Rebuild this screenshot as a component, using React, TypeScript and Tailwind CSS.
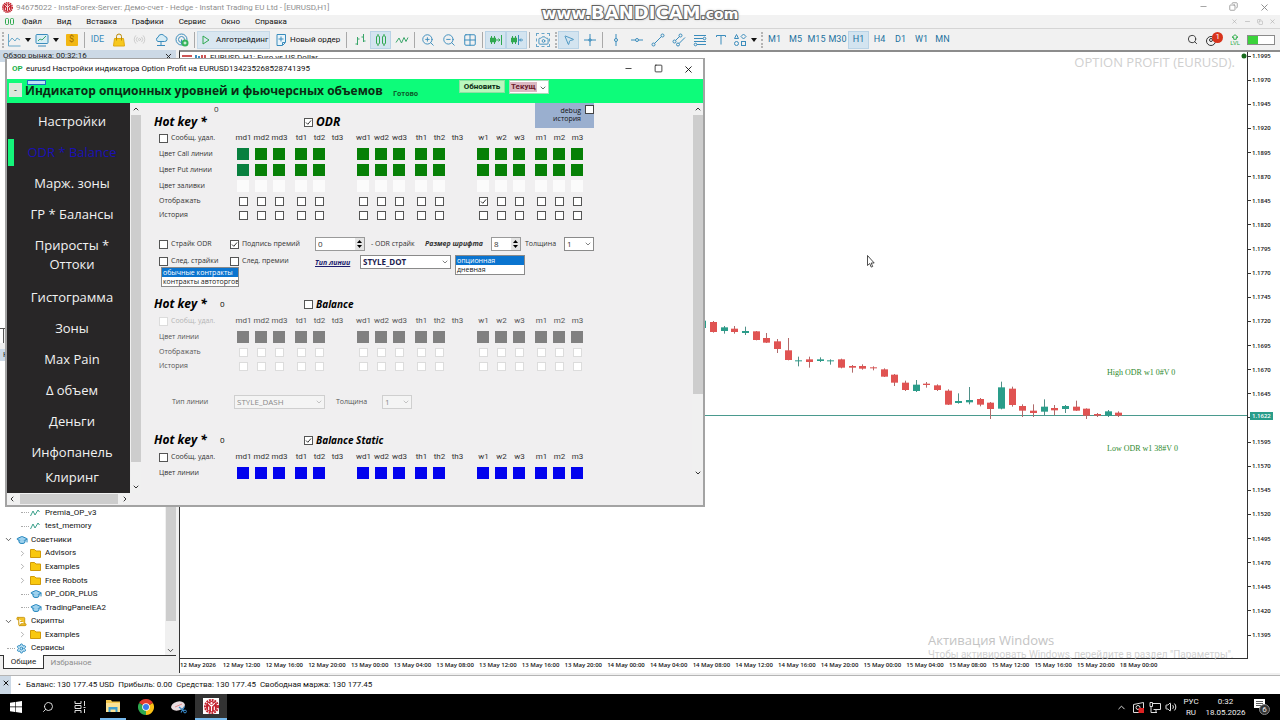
import type { ReactNode } from "react";
import { clsx } from "clsx";
import {
  Camera,
  ChevronDown,
  ChevronLeft,
  ChevronRight,
  ChevronUp,
  GraduationCap,
  Grid2x2,
  Minus,
  MousePointer2,
  Radio,
  ScrollText,
  Search,
  Settings,
  Square,
  Copy,
  Volume2,
  X,
  ZoomIn,
  ZoomOut,
} from "lucide-react";

const MENU = ["Файл", "Вид", "Вставка", "Графики", "Сервис", "Окно", "Справка"];
const TIMEFRAMES = ["M1", "M5", "M15", "M30", "H1", "H4", "D1", "W1", "MN"];

const PRICES = Array.from({ length: 25 }, (_, i) => (1.1995 - i * 0.0025).toFixed(4));

const HOURS = ["00:00", "04:00", "08:00", "12:00", "16:00", "20:00"];
const TIMES = [
  "12 May 2026",
  "12 May 12:00",
  "12 May 16:00",
  "12 May 20:00",
  ...["13", "14", "15"].flatMap((d) => HOURS.map((h) => `${d} May ${h}`)),
  "18 May 00:00",
];

// [up, body top, body bottom, high, low], in thirds of a pixel below y = 300
const CANDLES: [number, number, number, number, number][] = [
  [1, 62, 84, 60, 86],
  [0, 66, 96, 63, 98],
  [1, 82, 93, 78, 101],
  [0, 86, 96, 78, 101],
  [1, 93, 99, 80, 105],
  [0, 94, 120, 93, 121],
  [0, 114, 128, 99, 129],
  [0, 124, 147, 117, 159],
  [0, 151, 180, 114, 181],
  [1, 181, 184, 170, 199],
  [0, 178, 186, 170, 203],
  [1, 178, 183, 172, 186],
  [1, 181, 184, 178, 194],
  [0, 178, 203, 176, 205],
  [0, 198, 203, 195, 218],
  [0, 198, 206, 193, 209],
  [0, 202, 205, 199, 211],
  [0, 208, 230, 205, 231],
  [0, 224, 248, 222, 258],
  [0, 248, 270, 242, 273],
  [1, 254, 273, 240, 276],
  [0, 251, 255, 246, 263],
  [0, 256, 270, 253, 273],
  [0, 272, 314, 268, 315],
  [1, 303, 309, 280, 311],
  [1, 300, 307, 261, 313],
  [0, 297, 314, 294, 319],
  [0, 308, 327, 306, 357],
  [1, 262, 326, 245, 328],
  [0, 266, 315, 260, 320],
  [0, 318, 332, 313, 351],
  [0, 332, 339, 313, 351],
  [1, 320, 335, 298, 347],
  [0, 324, 331, 315, 346],
  [1, 318, 327, 315, 339],
  [0, 320, 332, 302, 333],
  [0, 326, 347, 325, 357],
  [0, 342, 347, 339, 351],
  [1, 334, 347, 330, 351],
  [0, 338, 347, 334, 351],
];

const PAIRS = [
  [["md1", "md2", "md3"], ["td1", "td2", "td3"]],
  [["wd1", "wd2", "wd3"], ["th1", "th2", "th3"]],
  [["w1", "w2", "w3"], ["m1", "m2", "m3"]],
];

/* ---------- toolbar ---------- */

const Sep = () => (
  <span className="flex h-4 w-[5px] justify-center">
    <span className="w-px bg-[#a9a9a9]" />
  </span>
);

const Grip = () => (
  <span className="flex h-4 w-[5px] justify-center">
    <span className="w-0 border-l-2 border-dotted border-[#b4b4b4]" />
  </span>
);

const Caret = () => (
  <svg viewBox="0 0 6 4" className="h-[4px] w-[6px]">
    <path d="M0 0h6L3 4z" fill="#111" />
  </svg>
);

function Tool({ label, active, wide, children }: { label: string; active?: boolean; wide?: boolean; children: ReactNode }) {
  return (
    <button
      aria-label={label}
      className={clsx(
        "flex h-[18px] shrink-0 items-center justify-center gap-[4px] text-[#3a8cbc]",
        wide ? "w-[28px]" : "w-[21px]",
        active && "border border-[#b9d3e6] bg-[#d3e4f0]"
      )}
    >
      {children}
    </button>
  );
}

function Ico({ children, color = "#3a8cbc" }: { children: ReactNode; color?: string }) {
  return (
    <svg viewBox="0 0 14 14" className="h-[14px] w-[14px] shrink-0" fill="none" stroke={color} strokeWidth="1">
      {children}
    </svg>
  );
}

function Toolbar() {
  return (
    <div className="flex h-[21px] items-center bg-[#f1f1f1]">
      <Grip />
      <Tool label="Тип графика" wide>
        <Ico color="#6ba9ca">
          <path d="M1.5 1v12h12M2 9l3-4 3 3 2-3 3 2" />
        </Ico>
        <Caret />
      </Tool>
      <Tool label="Индикаторы" wide>
        <Ico>
          <rect x="1" y="1.5" width="12" height="9" rx="1" fill="#d7ecf5" />
          <path d="M3 13h8" />
          <path d="M3 8l2-2 2 1 4-4" stroke="#3aa66a" />
        </Ico>
        <Caret />
      </Tool>
      <Tool label="Котировки">
        <span className="flex h-[12px] w-[12px] items-center justify-center rounded-[1px] bg-[#f2b714] text-[9px] leading-none text-[#a26d00]">
          $
        </span>
      </Tool>
      <Sep />
      <Tool label="IDE">
        <span className="text-[9px]">IDE</span>
      </Tool>
      <Tool label="Маркет">
        <Ico color="#e0aa10">
          <path d="M2.5 5.500h9l1 7.500h-11z" fill="#f7c81e" />
          <path d="M4.500 7.500V3.500a2.500 2.500 0 0 1 5 0v4" stroke="#b98a08" />
        </Ico>
      </Tool>
      <Tool label="Сигналы">
        <Radio size={13} strokeWidth={1.5} className="text-[#c4c4c4]" />
      </Tool>
      <Tool label="VPS">
        <Ico>
          <path d="M4 8.5h6.5a2.5 2.5 0 0 0 .3-5A3.6 3.6 0 0 0 4 4.3a2.2 2.2 0 0 0 0 4.2z" fill="#d7ecf5" />
          <path d="M7 9v3M3 12.5h8" />
        </Ico>
      </Tool>
      <Tool label="Тестер">
        <Ico>
          <circle cx="6.5" cy="6.5" r="5.5" />
          <circle cx="6.5" cy="6.5" r="3" />
          <path d="M6.5 6.5v5" />
          <circle cx="10" cy="10" r="3.500" fill="#35b35a" stroke="none" />
          <path d="M8.5 10h3M10 8.500v3" stroke="#fff" />
        </Ico>
      </Tool>
      <Sep />
      <button className="flex h-[18px] w-[73px] shrink-0 items-center gap-[6px] border border-[#c6d9e7] bg-[#d9e7f1] pl-[4px] text-[8px] text-[#111]">
        <svg viewBox="0 0 8 10" className="h-[10px] w-[8px] shrink-0">
          <path d="M1 1v8l6-4z" fill="none" stroke="#2fa84f" />
        </svg>
        <span className="whitespace-nowrap">Алготрейдинг</span>
      </button>
      <button className="flex h-[18px] w-[74px] shrink-0 items-center gap-[2px] pl-[4px] text-[8px] text-[#111]">
        <Ico>
          <path d="M3 1.500h8.500v8l-3 3H3z" fill="#e9f4fa" />
          <path d="M11 9.500H8.500V12M4.500 6h5M7 3.500v5" />
        </Ico>
        <span className="whitespace-nowrap">Новый ордер</span>
      </button>
      <Sep />
      <Tool label="Бары">
        <Ico color="#3aa66a">
          <path d="M4.500 4v8M2.500 11h2M4.500 6h2M10.500 1v8M8.500 4h2M10.500 8h2" />
        </Ico>
      </Tool>
      <Tool label="Свечи" active>
        <Ico color="#2fa84f">
          <rect x="2.500" y="3" width="3" height="8" rx="1" />
          <rect x="8.500" y="3" width="3" height="8" rx="1" />
          <path d="M4 1v2M4 11v2M10 1v2M10 11v2" />
        </Ico>
      </Tool>
      <Tool label="Линия">
        <Ico color="#3aa66a">
          <path d="M1 9.500 4 5l2.500 5L9 4.500l2 4 2-4" />
        </Ico>
      </Tool>
      <Sep />
      <Tool label="Увеличить">
        <ZoomIn size={14} strokeWidth={1.6} />
      </Tool>
      <Tool label="Уменьшить">
        <ZoomOut size={14} strokeWidth={1.6} />
      </Tool>
      <Tool label="Окна плиткой">
        <Grid2x2 size={14} strokeWidth={1.7} />
      </Tool>
      <Sep />
      <Tool label="Автопрокрутка" active>
        <Ico color="#2fa84f">
          <path d="M2.500 3v8M5.500 3v8M12.500 2v10M7 7h4M9.500 5.500 11 7 9.500 8.500" />
          <path d="M1.500 5h2v4h-2zM4.500 5h2v4h-2z" fill="#2fa84f" />
        </Ico>
      </Tool>
      <Tool label="Сдвиг графика" active>
        <Ico>
          <path d="M8.500 2v10M13 7H9.500M11 5.500 9.500 7 11 8.500" />
          <path d="M2.500 3v8M5.500 3v8M1.500 5h2v4h-2zM4.500 5h2v4h-2z" stroke="#2fa84f" fill="#2fa84f" />
        </Ico>
      </Tool>
      <Sep />
      <Tool label="Снимок экрана">
        <span className="flex h-[14px] w-[14px] items-end justify-end border border-dashed border-[#6ba6c9]">
          <Camera size={11} strokeWidth={2} className="shrink-0 bg-[#f1f1f1]" />
        </span>
      </Tool>
      <Grip />
      <Tool label="Курсор" active>
        <MousePointer2 size={12} strokeWidth={1.7} />
      </Tool>
      <Tool label="Перекрестие">
        <Ico>
          <path d="M7 1v12M1 7h12M5.500 7 7 5.500 8.500 7 7 8.500z" />
        </Ico>
      </Tool>
      <Sep />
      <Tool label="Вертикальная линия">
        <Ico>
          <path d="M7 1v4.500M7 8.500V13" />
          <circle cx="7" cy="7" r="1.500" />
        </Ico>
      </Tool>
      <Tool label="Горизонтальная линия">
        <Ico>
          <path d="M1 7h4.500M8.500 7H13" />
          <circle cx="7" cy="7" r="1.500" />
        </Ico>
      </Tool>
      <Tool label="Трендовая линия">
        <Ico>
          <path d="M3.500 10.500l7-7" />
          <circle cx="2.500" cy="11.500" r="1.500" />
          <circle cx="11.500" cy="2.500" r="1.500" />
        </Ico>
      </Tool>
      <Tool label="Канал">
        <Ico>
          <path d="M3.500 7.500l4-4M7 10.500l6-6" />
          <circle cx="2.500" cy="8.500" r="1.500" />
          <circle cx="8.500" cy="2.500" r="1.500" />
          <circle cx="6" cy="11.500" r="1.500" />
        </Ico>
      </Tool>
      <Tool label="Фибоначчи">
        <Ico>
          <path d="M1 2.500h12M1 5.500h9M1 8.500h12M4 11.500h9" />
          <circle cx="11.500" cy="5.500" r="1.300" />
          <circle cx="2.500" cy="11.500" r="1.300" />
        </Ico>
      </Tool>
      <Tool label="Текст">
        <Ico>
          <path d="M2.500 4V2.500h9V4M7 2.500v9" />
        </Ico>
      </Tool>
      <Tool label="Объекты" wide>
        <Ico>
          <path d="M1.500 5.500h4l-2-4zM8 3.500l2.500-2.500L13 3.500 10.500 6z" />
          <circle cx="3.500" cy="10.500" r="2" />
          <rect x="8.500" y="8.500" width="4" height="4" />
        </Ico>
        <Caret />
      </Tool>
      <Grip />
      {TIMEFRAMES.map((tf) => (
        <Tool key={tf} label={tf} active={tf === "H1"}>
          <span className="text-[9px] text-[#23719f]">{tf}</span>
        </Tool>
      ))}
      <div className="ml-auto flex items-center gap-[7px] pr-[5px]">
        <Search size={11} className="text-[#333]" />
        <span className="relative flex h-[16px] w-[18px] items-center">
          <Ico color="#333">
            <circle cx="6" cy="8" r="4.500" />
            <circle cx="6" cy="7" r="1.500" />
          </Ico>
          <span className="absolute top-0 right-0 flex h-[11px] w-[11px] items-center justify-center rounded-full bg-[#d8331c] text-[8px] text-white">
            1
          </span>
        </span>
        <span className="flex flex-col items-center text-[6px] leading-[6px] text-[#2fae4a]">
          <svg viewBox="0 0 8 6" className="h-[6px] w-[8px]" fill="none" stroke="#2fae4a">
            <path d="M4 .7l3 2.600H5.300v2H2.700v-2H1z" />
          </svg>
          LVL
        </span>
        <span className="flex h-[10px] w-[28px] border border-[#8b8b8b] bg-white">
          <span className="w-[10px] bg-[#3bd23b]" />
        </span>
      </div>
    </div>
  );
}

/* ---------- navigator ---------- */

function TreeRow({ level, kind, name }: { level: 0 | 1; kind: string; name: string }) {
  const branch = kind !== "ind" && !(kind === "cap" && level === 1) && kind !== "gear";
  return (
    <li className="flex flex-1 items-center whitespace-nowrap">
      {level === 1 && <span className="w-[14px] shrink-0" />}
      <span className="flex h-full w-[16px] shrink-0 items-center justify-center">
        {branch ? (
          level === 0 ? (
            <ChevronDown size={9} className="text-[#333]" />
          ) : (
            <ChevronRight size={9} className="text-[#999]" />
          )
        ) : (
          <span className="ml-[6px] w-[8px] border-t border-dotted border-[#aaa]" />
        )}
      </span>
      <span className="flex w-[15px] shrink-0 items-center">
        {kind === "cap" && <GraduationCap size={12} className="fill-[#9fd2ee] text-[#2385bd]" />}
        {kind === "scroll" && <ScrollText size={11} className="fill-[#f5c52a] text-[#c9960c]" />}
        {kind === "gear" && <Settings size={11} className="fill-[#c5e4f4] text-[#2385bd]" />}
        {kind === "folder" && (
          <svg viewBox="0 0 11 9" className="h-[9px] w-[11px]">
            <path d="M.5.500h4l1.500 1.500h4.500v6.500H.5z" fill="#f9c80e" stroke="#d09a08" />
          </svg>
        )}
        {kind === "ind" && (
          <svg viewBox="0 0 10 8" className="h-[8px] w-[10px]">
            <path d="M.5 7 3 2l2 4 3-5 1.500 2" fill="none" stroke="#3aa08a" />
          </svg>
        )}
      </span>
      {name}
    </li>
  );
}

function Sidebar() {
  return (
    <aside className="flex w-[176px] shrink-0 flex-col">
      <div className="flex h-[12px] items-center justify-between bg-[#ccd9e6] px-[3px] text-[8px]">
        <span>Обзор рынка: 00:32:16</span>
        <X size={9} strokeWidth={2.500} />
      </div>
      <div className="h-[266px] border-r border-[#d5d5d5] bg-white" />
      <div className="h-[21px] border-t border-[#555]">
        <div className="h-[14px] w-[4px] border-r border-[#555] bg-white" />
      </div>
      <div className="flex h-[12px] items-center bg-[#ccd9e6] px-[3px] text-[8px]">Навигатор</div>
      <div className="flex flex-1 items-end bg-white">
        <ul className="flex h-[149px] flex-1 flex-col text-[8px] text-[#111]">
          <TreeRow level={1} kind="ind" name="Premia_OP_v3" />
          <TreeRow level={1} kind="ind" name="test_memory" />
          <TreeRow level={0} kind="cap" name="Советники" />
          <TreeRow level={1} kind="folder" name="Advisors" />
          <TreeRow level={1} kind="folder" name="Examples" />
          <TreeRow level={1} kind="folder" name="Free Robots" />
          <TreeRow level={1} kind="cap" name="OP_ODR_PLUS" />
          <TreeRow level={1} kind="cap" name="TradingPanelEA2" />
          <TreeRow level={0} kind="scroll" name="Скрипты" />
          <TreeRow level={1} kind="folder" name="Examples" />
          <TreeRow level={0} kind="gear" name="Сервисы" />
        </ul>
        <div className="flex h-[149px] w-[11px] flex-col items-center justify-between bg-[#f0f0f0]">
          <span className="h-[115px] w-[10px] bg-[#cdcdcd]" />
          <ChevronDown size={9} />
        </div>
      </div>
      <div className="flex h-[18px] items-start border-t border-[#333] pl-[3px] text-[8px]">
        <button className="-mt-px h-[14px] w-[41px] border border-t-0 border-[#333] bg-white">Общие</button>
        <button className="h-[13px] w-[54px] text-[#8d8d8d]">Избранное</button>
      </div>
    </aside>
  );
}

/* ---------- chart ---------- */

function Chart() {
  return (
    <main className="flex flex-1 border-t-2 border-l border-t-[#8c8c8c] border-l-[#333] bg-white">
      <div className="flex flex-1 flex-col">
        <div className="relative border-r border-b border-[#333]">
          <svg viewBox="180 52 1067 606" preserveAspectRatio="xMaxYMin meet" className="block h-[606px] w-full">
            <path d="M180 415.500H1247" stroke="#4a9a8e" />
            {CANDLES.map(([up, top, bottom, high, low], i) => {
              const x = Math.round(702.3 + i * 10.67);
              const fill = up ? "#2a9d8a" : "#e05352";
              return (
                <g key={i}>
                  <path d={`M${x + 0.5} ${300 + high / 3}V${300 + low / 3}`} stroke={up ? "#4f9088" : "#b06a6a"} />
                  <rect x={x - 3} y={300 + top / 3} width="7" height={(bottom - top) / 3} fill={fill} />
                </g>
              );
            })}
            <circle cx="1244" cy="56" r="2.500" fill="#17691c" />
            <g fill="#2f8a2f" className="font-['Liberation_Serif',serif] text-[8px]">
              <text x="1107" y="375">High ODR w1 0#V 0</text>
              <text x="1107" y="451">Low ODR w1 38#V 0</text>
            </g>
          </svg>
          <div className="absolute top-0 left-[2px] flex items-center gap-[4px] text-[8px] leading-[12px]">
            <svg viewBox="0 0 24 8" className="h-[8px] w-[24px]" fill="none">
              <path d="M0 2h10M0 5h10" stroke="#c55" strokeWidth="2" />
              <path d="M14 1v6M17 2v6" stroke="#3a8fc0" strokeWidth="2" />
              <path d="M20 1v6M23 1v6" stroke="#c55" strokeWidth="2" />
            </svg>
            EURUSD, H1: Euro vs US Dollar
          </div>
          <div className="absolute top-[1px] right-[12px] font-['Open_Sans',sans-serif] text-[13px] leading-[18px] text-[#d0d0d0]">
            OPTION PROFIT (EURUSD).
          </div>
          <div className="absolute right-[14px] bottom-[-4px] w-[305px] whitespace-nowrap text-[#c4c4c4]">
            <p className="font-['Open_Sans',sans-serif] text-[13px] leading-[16px]">Активация Windows</p>
            <p className="text-[10px] leading-[14px] text-[#d2d2d2]">
              Чтобы активировать Windows, перейдите в раздел "Параметры".
            </p>
          </div>
        </div>
        <div className="grid grid-cols-[repeat(25,1fr)] font-['Open_Sans',sans-serif] text-[6px] leading-[12px] font-semibold text-[#111]">
          {TIMES.map((t) => (
            <span key={t} className="w-0 whitespace-nowrap">
              {t}
            </span>
          ))}
        </div>
      </div>
      <div className="relative flex h-[606px] w-[32px] flex-col justify-between pb-[19px] font-['Open_Sans',sans-serif] text-[6px] leading-[8px] font-semibold text-[#111]">
        {PRICES.map((p) => (
          <span key={p} className="flex items-center gap-px">
            <span className="h-px w-[3px] bg-[#333]" />
            {p}
          </span>
        ))}
        <span className="absolute top-[360px] left-[2px] bg-[#2a9d8a] px-[2px] text-white">1.1622</span>
      </div>
    </main>
  );
}

/* ---------- indicator window ---------- */

function Check({ label, text, checked, disabled }: { label: string; text?: boolean; checked?: boolean; disabled?: boolean }) {
  return (
    <label className={clsx("flex items-center gap-[3px] whitespace-nowrap", disabled && "text-[#b5b5b5]")}>
      <span className="relative flex">
        <input
          type="checkbox"
          aria-label={label}
          defaultChecked={checked}
          disabled={disabled}
          className="peer h-[9px] w-[9px] appearance-none border border-[#555] bg-white disabled:border-[#dcdcdc]"
        />
        <svg viewBox="0 0 9 9" className="pointer-events-none absolute inset-0 hidden peer-checked:block" fill="none">
          <path d="M2 4.500 3.800 6.300 7 2.500" stroke="#333" />
        </svg>
      </span>
      {text && label}
    </label>
  );
}

function DropDown({ label, value, className, disabled }: { label: string; value: string; className: string; disabled?: boolean }) {
  return (
    <span className={clsx("relative flex h-[14px]", className)}>
      <select
        aria-label={label}
        disabled={disabled}
        className="w-full appearance-none border border-[#8a8a8a] bg-white pl-[2px] leading-[12px] disabled:border-[#cfcfcf] disabled:bg-[#f4f4f4] disabled:text-[#8a8a8a]"
      >
        <option>{value}</option>
      </select>
      <ChevronDown size={8} className={clsx("pointer-events-none absolute top-[3px] right-[2px]", disabled ? "text-[#aaa]" : "text-[#444]")} />
    </span>
  );
}

function Spin({ label, value, className }: { label: string; value: number; className: string }) {
  return (
    <span className={clsx("flex h-[14px] border border-[#9a9a9a] bg-white", className)}>
      <input aria-label={label} defaultValue={value} className="w-0 flex-1 bg-white px-[2px] text-[8px]" />
      <span className="flex w-[9px] flex-col justify-evenly bg-[#e4e4e4]">
        <button type="button" aria-label="Больше" className="flex justify-center">
          <svg viewBox="0 0 5 3" className="h-[3px] w-[5px]">
            <path d="M0 3h5L2.500 0z" />
          </svg>
        </button>
        <button type="button" aria-label="Меньше" className="flex justify-center">
          <svg viewBox="0 0 5 3" className="h-[3px] w-[5px]">
            <path d="M0 0h5L2.500 3z" />
          </svg>
        </button>
      </span>
    </span>
  );
}

function ListBox({ label, options, className }: { label: string; options: string[]; className: string }) {
  return (
    <select
      size={2}
      aria-label={label}
      defaultValue={options[0]}
      className={clsx(
        "h-[20px] appearance-none overflow-hidden border border-[#8a8a8a] bg-white text-[7px] leading-[9px] text-[#222]",
        "[&>option]:h-[9px] [&>option]:min-h-0 [&>option]:p-0 [&>option]:px-px",
        "[&>option:checked]:bg-[linear-gradient(#0a74cf,#0a74cf)] [&>option:checked]:[-webkit-text-fill-color:white]",
        className
      )}
    >
      {options.map((o) => (
        <option key={o}>{o}</option>
      ))}
    </select>
  );
}

function Row({ label, tall, children }: { label: ReactNode; tall?: boolean; children: (name: string) => ReactNode }) {
  return (
    <div className={clsx("flex items-center pl-[17px]", tall ? "h-[16px]" : "h-[14px]")}>
      <div className="w-[75px] shrink-0 whitespace-nowrap">{label}</div>
      <div className="flex gap-[8px]">
        {PAIRS.map((pair, i) => (
          <div key={i} className="flex gap-[4px]">
            {pair.map((group) => (
              <div key={group[0]} className="flex">
                {group.map((name) => (
                  <div key={name} className="flex w-[18px] justify-center">
                    {children(name)}
                  </div>
                ))}
              </div>
            ))}
          </div>
        ))}
      </div>
    </div>
  );
}

const isEmpty = (name: string) => name === "td3" || name === "th3";

function HeaderRow({ disabled }: { disabled?: boolean }) {
  return (
    <Row tall label={<Check label="Сообщ. удал." text disabled={disabled} />}>
      {(name) => <span className="pl-px font-['Roboto',sans-serif] text-[8px]">{name}</span>}
    </Row>
  );
}

function ColorRow({ label, color, first = color }: { label: string; color: string; first?: string }) {
  return (
    <Row tall label={label}>
      {(name) =>
        !isEmpty(name) && (
          <button type="button" aria-label={`${label} ${name}`} className={clsx("h-[12px] w-[12px]", name === "md1" ? first : color)} />
        )
      }
    </Row>
  );
}

function CheckRow({ label, on, disabled }: { label: string; on?: string; disabled?: boolean }) {
  return (
    <Row label={label}>
      {(name) => !isEmpty(name) && <Check label={`${label} ${name}`} checked={name === on} disabled={disabled} />}
    </Row>
  );
}

function SectionHead({ title, checked, count, size = "text-[10px]" }: { title: string; checked?: boolean; count?: string; size?: string }) {
  return (
    <div className="flex h-[14px] items-center pl-[12px] text-black">
      <h2 className="w-[66px] text-[12px] leading-[14px] font-bold whitespace-nowrap italic">Hot key *</h2>
      <span className="w-[84px] text-[8px]">{count}</span>
      <span className={clsx("flex items-center leading-[14px] font-bold whitespace-nowrap italic", size)}>
        <Check label={title} text checked={checked} />
      </span>
    </div>
  );
}

function ScrollBar({ thumb, className }: { thumb: string; className: string }) {
  return (
    <div className={clsx("flex w-[11px] shrink-0 flex-col items-center bg-[#f0f0f0] text-[#333]", className)}>
      <span className="flex h-[12px] items-center">
        <ChevronUp size={8} strokeWidth={3} />
      </span>
      <span className={clsx("w-[10px] bg-[#cdcdcd]", thumb)} />
      <span className="mt-auto flex h-[12px] items-center">
        <ChevronDown size={8} strokeWidth={3} />
      </span>
    </div>
  );
}

const NAV = ["Настройки", "ODR * Balance", "Марж. зоны", "ГР * Балансы", "Приросты * Оттоки", "Гистограмма", "Зоны", "Max Pain", "Δ объем", "Деньги", "Инфопанель", "Клиринг"];

function IndicatorWindow() {
  return (
    <section className="absolute top-[58px] left-[5px] w-[700px] border-2 border-t border-[#a3a3a3] bg-[#f0eff0] pb-px font-['Open_Sans','Noto_Sans',sans-serif] text-[7px] text-[#333]">
      <header className="flex h-[20px] items-center bg-white pl-[5px] font-['Roboto',sans-serif] text-[#111]">
        <b className="w-[14px] text-[8px] text-[#1eb24b]">OP</b>
        <h1 className="text-[8px] whitespace-nowrap">eurusd Настройки индикатора Option Profit на EURUSD134235268528741395</h1>
        <div className="ml-auto flex">
          <button aria-label="Свернуть" className="flex w-[30px] justify-center">
            <Minus size={9} />
          </button>
          <button aria-label="Развернуть" className="flex w-[30px] justify-center">
            <Square size={9} />
          </button>
          <button aria-label="Закрыть" className="flex w-[30px] justify-center">
            <X size={11} />
          </button>
        </div>
      </header>

      <div className="relative flex h-[24px] items-start bg-[#0dfc7a] pl-[2px] text-[#0b2b12]">
        <button className="mt-[4px] h-[14px] w-[13px] bg-[#d9e8dc] text-[9px] leading-[12px]">-</button>
        <span className="absolute top-px left-[20px] h-[5px] w-[19px] border border-[#1c6fc4] bg-[#bfe2f5]" />
        <h2 className="w-[371px] pl-[3px] text-[12px] leading-[24px] font-bold whitespace-nowrap">
          Индикатор опционных уровней и фьючерсных объемов
        </h2>
        <span className="mt-[9px] w-[66px] text-[7px] leading-[12px] font-bold text-[#0c5e2b]">Готово</span>
        <button className="mt-px h-[13px] w-[46px] border border-[#8fe0a4] bg-[#baf7bd] font-['Roboto',sans-serif] text-[8px] leading-[11px] font-bold">
          Обновить
        </button>
        <span className="relative mt-px ml-[4px] flex h-[14px] w-[40px] border border-[#a9d9b9] bg-white">
          <select
            aria-label="Серия"
            className="h-[10px] w-[27px] appearance-none self-center bg-[#dcb9c3] pl-px font-['Roboto',sans-serif] text-[8px] leading-[10px] font-bold text-[#6b1a2c]"
          >
            <option>Текущ</option>
          </select>
          <ChevronDown size={8} className="pointer-events-none absolute top-[3px] right-px" />
        </span>
      </div>

      <div className="flex">
        <div className="w-[123px] shrink-0">
          <nav className="flex h-[390px] flex-col bg-[#282627] pt-[3px] text-[13px] leading-[19px] text-[#f2f2f2]">
            {NAV.map((item) => {
              const active = item === "ODR * Balance";
              return (
                <a
                  key={item}
                  href="#"
                  className={clsx(
                    "flex shrink-0 items-center",
                    item === "Приросты * Оттоки" ? "mb-[2px] h-[50px]" : item === "Клиринг" ? "h-[18px]" : "h-[31px]",
                    active && "text-[#1a10b4]"
                  )}
                >
                  <span className={clsx("ml-px h-[27px] w-[6px] shrink-0", active && "bg-[#14f57a]")} />
                  <span className="flex-1 px-[8px] text-center">{item}</span>
                </a>
              );
            })}
          </nav>
          <div className="flex h-[11px] items-center justify-between bg-[#f0f0f0] px-px text-[#333]">
            <ChevronLeft size={8} strokeWidth={3} />
            <span className="h-[10px] w-[98px] bg-[#cdcdcd]" />
            <ChevronRight size={8} strokeWidth={3} />
          </div>
        </div>
        <ScrollBar thumb="h-[347px]" className="h-[390px]" />

        <form className="flex-1 pl-px">
          <div className="flex h-[27px] items-start">
            <div className="w-[393px]">
              <div className="flex h-[12px] items-center pl-[72px] text-[8px]">0</div>
              <SectionHead title="ODR" checked size="text-[12px]" />
            </div>
            <label className="flex h-[25px] w-[59px] items-start justify-end gap-[4px] bg-[#9aafcf] text-right text-[7px] leading-[8px] text-[#111]">
              <span className="pt-[4px]">
                debug
                <br />
                история
              </span>
              <input type="checkbox" className="mt-[2px] h-[9px] w-[9px] appearance-none border border-[#444] bg-white" />
            </label>
          </div>
          <HeaderRow />
          <ColorRow label="Цвет Call линии" color="bg-[#068006]" first="bg-[#08803f]" />
          <ColorRow label="Цвет Put линии" color="bg-[#068006]" first="bg-[#08803f]" />
          <ColorRow label="Цвет заливки" color="bg-[#fbfbfb]" />
          <CheckRow label="Отображать" on="w1" />
          <CheckRow label="История" />

          <div className="mt-[12px] flex h-[20px] items-center pl-[17px] whitespace-nowrap">
            <div className="w-[71px]">
              <Check label="Страйк ODR" text />
            </div>
            <div className="w-[85px]">
              <Check label="Подпись премий" text checked />
            </div>
            <Spin label="ODR страйк" value={0} className="w-[50px]" />
            <span className="w-[60px] pl-[6px]">- ODR страйк</span>
            <b className="w-[66px] italic">Размер шрифта</b>
            <Spin label="Размер шрифта" value={8} className="w-[30px]" />
            <span className="w-[43px] pl-[4px]">Толщина</span>
            <DropDown label="Толщина" value="1" className="w-[30px] text-[8px]" />
          </div>
          <div className="flex h-[43px] items-start pt-px pl-[17px]">
            <div className="w-[156px]">
              <div className="flex h-[12px] items-center">
                <div className="w-[71px]">
                  <Check label="След. страйки" text />
                </div>
                <Check label="След. премии" text />
              </div>
              <ListBox label="Контракты" options={["обычные контракты", "контракты автоторгов"]} className="ml-[2px] w-[78px]" />
            </div>
            <a href="#" className="w-[45px] leading-[16px] font-bold text-[#1b1b6e] italic underline">
              Тип линии
            </a>
            <DropDown label="Тип линии" value="STYLE_DOT" className="w-[91px] text-[8px] font-bold text-[#1b1b4e]" />
            <ListBox label="Линия" options={["опционная", "дневная"]} className="ml-[4px] w-[70px]" />
          </div>

          <SectionHead title="Balance" count="0" />
          <div className="mt-[2px] text-[#555]">
            <HeaderRow disabled />
            <ColorRow label="Цвет линии" color="bg-[#808080]" />
            <CheckRow label="Отображать" disabled />
            <CheckRow label="История" disabled />
            <div className="mt-[21px] mb-[23px] flex h-[16px] items-center pl-[30px]">
              <span className="w-[62px]">Тип линии</span>
              <DropDown label="Тип линии Balance" value="STYLE_DASH" className="w-[91px] text-[8px]" disabled />
              <span className="ml-[11px] w-[46px]">Толщина</span>
              <DropDown label="Толщина Balance" value="1" className="w-[30px] text-[8px]" disabled />
            </div>
          </div>

          <SectionHead title="Balance Static" count="0" checked />
          <div className="mt-[2px]">
            <HeaderRow />
            <ColorRow label="Цвет линии" color="bg-[#0202ee]" />
          </div>
        </form>
        <ScrollBar thumb="h-[279px]" className="h-[376px]" />
      </div>
    </section>
  );
}

/* ---------- taskbar ---------- */

function InstaLogo({ className }: { className: string }) {
  return (
    <svg viewBox="0 0 16 16" className={className}>
      <circle cx="8" cy="8" r="7" fill="none" stroke="#c2202c" strokeWidth="2" strokeDasharray="2 1" />
      <circle cx="8" cy="8" r="6" fill="#c2202c" />
      <path d="M8 6v7M4.500 4.500 8 8l3.500-3.500M5 8v4M11 8v4" stroke="#fff" fill="none" strokeWidth="1.200" />
      <circle cx="8" cy="4.500" r="1.200" fill="#fff" />
    </svg>
  );
}

function Taskbar() {
  return (
    <footer className="flex h-[26px] items-center bg-black text-[#eee]">
      <button aria-label="Пуск" className="flex w-[32px] justify-center">
        <svg viewBox="0 0 12 12" className="h-[12px] w-[12px]" fill="#fff">
          <path d="M0 1.700 5 1v4.600H0zM5.600.900 12 0v5.600H5.600zM0 6.300h5V11l-5-.7zM5.600 6.300H12V12l-6.400-.9z" />
        </svg>
      </button>
      <button aria-label="Поиск" className="flex w-[32px] justify-center">
        <Search size={12} strokeWidth={1.800} className="-scale-x-100" />
      </button>
      <button aria-label="Представление задач" className="flex w-[32px] justify-center">
        <svg viewBox="0 0 12 12" className="h-[12px] w-[12px]" fill="none" stroke="#ddd">
          <path d="M1 0v2.500h6V0M1 12V9.500h6V12M1 4.500h6v3H1zM10.500 0v5M10.500 8v4M9.500 6.500h2" />
        </svg>
      </button>
      <button aria-label="Проводник" className="flex h-full w-[33px] items-center justify-center">
        <span className="flex h-full w-[26px] items-center justify-center border-b-2 border-[#76b9ed]">
          <svg viewBox="0 0 14 12" className="h-[12px] w-[14px]">
            <path d="M0 0h5l1 1.500h8V12H0z" fill="#f3c74e" />
            <path d="M0 3h14v9H0z" fill="#fbe294" />
            <path d="M2.500 12V7h9v5h-2V9.500h-5V12z" fill="#3f9fd0" />
          </svg>
        </span>
      </button>
      <button aria-label="Chrome" className="flex w-[33px] justify-center">
        <svg viewBox="0 0 16 16" className="h-[16px] w-[16px]">
          <path d="M8 8 1.070 4A8 8 0 0 1 14.930 4z" fill="#e33b2e" />
          <path d="M8 8h0L14.930 4A8 8 0 0 1 8 16z" fill="#fbc116" />
          <path d="M8 8v8A8 8 0 0 1 1.070 4z" fill="#2da94f" />
          <circle cx="8" cy="8" r="3.800" fill="#fff" />
          <circle cx="8" cy="8" r="3" fill="#3a7cec" />
        </svg>
      </button>
      <button aria-label="Ножницы" className="flex w-[33px] justify-center">
        <svg viewBox="0 0 16 14" className="h-[14px] w-[16px]">
          <ellipse cx="7" cy="6" rx="7" ry="4.500" fill="#e9dde0" transform="rotate(-15 7 6)" />
          <path d="M4 7l7-3" stroke="#d55" strokeWidth=".6" />
          <path d="M8 7l5 4M13.500 6.500l-3.500 6" stroke="#3c8fd0" strokeWidth="1.200" />
          <circle cx="14" cy="11.500" r="1.400" fill="none" stroke="#3c8fd0" />
        </svg>
      </button>
      <button aria-label="InstaForex" className="flex h-full w-[32px] items-center justify-center border-b-2 border-[#76b9ed] bg-[#333]">
        <span className="flex h-[16px] w-[16px] items-center justify-center bg-white">
          <InstaLogo className="h-[15px] w-[15px]" />
        </span>
      </button>

      <div className="ml-auto flex items-center text-[8px] leading-[11px]">
        <ChevronUp size={11} className="mr-[6px]" />
        <svg viewBox="0 0 11 11" className="mr-[5px] h-[11px] w-[11px]" fill="none" stroke="#ddd">
          <path d="M.5 2.500 10.500.500v10H.5z" />
          <circle cx="5" cy="5.500" r="2" />
          <rect x="5.500" y="6" width="5.500" height="5" fill="#d22" stroke="none" />
        </svg>
        <svg viewBox="0 0 12 11" className="mr-[4px] h-[11px] w-[12px]" fill="none" stroke="#ddd">
          <path d="M3.500 1.500h8v6h-7M1 .5h2.500v4H1zM2 5v5.500h6M7 8v2" />
        </svg>
        <Volume2 size={12} />
        <span className="w-[28px] text-center">
          РУС
          <br />
          RU
        </span>
        <span className="w-[41px] text-center">
          0:32
          <br />
          18.05.2026
        </span>
        <span className="relative mr-[10px] ml-[8px] flex h-[16px] w-[16px]">
          <svg viewBox="0 0 12 12" className="h-[12px] w-[12px]">
            <path d="M0 0h11v9H8v3L5 9H0z" fill="#fff" />
            <path d="M2 2.500h7M2 4.500h7M2 6.500h7" stroke="#333" strokeWidth=".8" />
          </svg>
          <span className="absolute right-0 bottom-0 flex h-[11px] w-[11px] items-center justify-center rounded-full border border-[#888] bg-[#333] text-[8px] leading-none">
            6
          </span>
        </span>
      </div>
    </footer>
  );
}

export default function App() {
  return (
    <div className="relative flex min-h-screen flex-col bg-[#f0f0f0] font-['Roboto','Noto_Sans',sans-serif] text-[#222]">
      <header>
        <div className="flex h-[15px] items-center bg-white pl-[2px] text-[8px] text-[#8f8f8f]">
          <InstaLogo className="mr-[3px] h-[11px] w-[11px]" />
          94675022 - InstaForex-Server: Демо-счет - Hedge - Instant Trading EU Ltd - [EURUSD,H1]
          <div className="ml-auto flex text-[#888]">
            <button aria-label="Свернуть" className="flex w-[30px] justify-center">
              <Minus size={9} />
            </button>
            <button aria-label="Восстановить" className="flex w-[30px] justify-center">
              <Copy size={9} className="-scale-x-100" />
            </button>
            <button aria-label="Закрыть" className="flex w-[32px] justify-center">
              <X size={11} />
            </button>
          </div>
        </div>
        <nav className="flex h-[14px] items-center border-b border-[#d5d5d5] bg-[#f2f2f2] pl-[5px] text-[8px] text-[#111]">
          <svg viewBox="0 0 9 10" className="mr-[8px] h-[10px] w-[9px]" fill="none" stroke="#2fa84f">
            <rect x=".5" y="1.500" width="3" height="6" rx="1" />
            <rect x="5.500" y="1.500" width="3" height="6" rx="1" />
          </svg>
          <div className="flex gap-[15px]">
            {MENU.map((m) => (
              <button key={m}>{m}</button>
            ))}
          </div>
          <div className="ml-auto flex items-center gap-[6px] pr-[4px] text-[#aaa]">
            <X size={7} />
            <Minus size={7} />
            <Copy size={6} />
            <X size={7} />
          </div>
        </nav>
        <Toolbar />
      </header>

      <div className="flex flex-1 gap-[3px]">
        <Sidebar />
        <Chart />
      </div>

      <div className="mt-[2px] flex h-[19px] items-center border-t border-[#b5b5b5] bg-white text-[8px] whitespace-pre text-[#111]">
        <span className="flex h-full w-[11px] items-start justify-center bg-[#ccd9e6] pt-[3px]">
          <X size={8} strokeWidth={3} />
        </span>
        <span className="w-[15px] pl-[7px]">•</span>
        Баланс: 130 177.45 USD  Прибыль: 0.00  Средства: 130 177.45  Свободная маржа: 130 177.45
      </div>
      <Taskbar />

      <IndicatorWindow />

      <div className="absolute top-[2px] left-1/2 flex -translate-x-1/2 items-baseline font-['DejaVu_Sans',sans-serif] text-[18px] leading-[22px] font-bold text-white [-webkit-text-stroke:2px_#5a5a5a] [paint-order:stroke] [text-shadow:0_0_3px_#777]">
        <span className="text-[16px]">www.</span>BANDICAM<span className="text-[14px]">.com</span>
      </div>
      <svg viewBox="0 0 8 13" className="pointer-events-none absolute top-[255px] left-[867px] h-[13px] w-[8px]">
        <path d="M.5.500v10l2.200-2 1.500 3.600 1.500-.6-1.500-3.500h3z" fill="#fff" stroke="#222" strokeWidth=".8" />
      </svg>
    </div>
  );
}
